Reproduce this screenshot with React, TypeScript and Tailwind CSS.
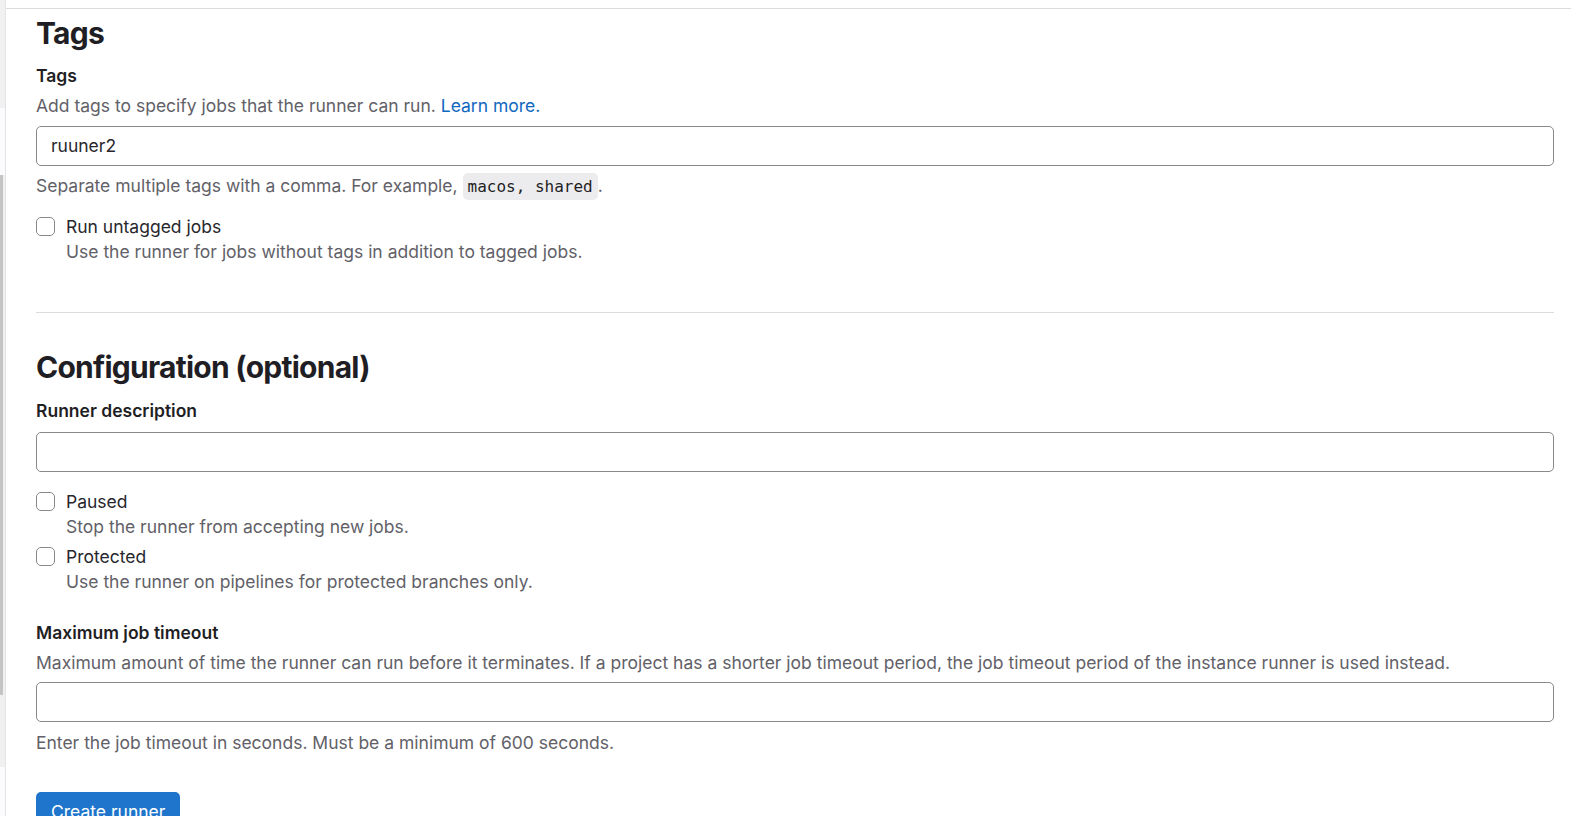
import React from "react";

const font = { fontFamily: "Inter, 'Noto Sans', sans-serif" };

// Checkbox row with label and helper text underneath
function CheckRow({ label, help, className = "" }: { label: string; help: string; className?: string }) {
  return (
    <div className={`flex gap-[11px] ${className}`}>
      <div className="mt-[3px] h-[19px] w-[19px] shrink-0 rounded-[5px] border border-[#89888d] bg-white" />
      <div>
        <div className="leading-[25px] text-[#28272d]">{label}</div>
        <div className="leading-[25px] text-[#626168]">{help}</div>
      </div>
    </div>
  );
}

function TextInput({ value = "" }: { value?: string }) {
  return (
    <div className="flex h-[40px] items-center rounded-[5px] border border-[#89888d] bg-white px-[14px] text-[#28272d]">
      {value}
    </div>
  );
}

export default function App() {
  return (
    <div className="flex h-[816px] w-full overflow-hidden bg-white text-[17.5px]" style={font}>
      {/* left sidebar sliver */}
      <div className="flex w-[6px] shrink-0 flex-col border-r border-[#e4e4e6]">
        <div className="h-[108px] bg-[#f1f1f2]" />
        <div className="h-[67px] bg-[#fbfafd]" />
        <div className="flex h-[520px] bg-[#f0f0f0]">
          <div className="w-[3px] bg-[#c4c4c4]" />
        </div>
        <div className="h-[72px] bg-[#f0f0f0]" />
        <div className="flex-1 bg-[#fbfafd]" />
      </div>

      <div className="flex-1">
        <div className="h-[8px]" />
        <div className="border-t border-[#dcdcde] pl-[30px] pr-[17px]">
          <h2 className="mt-[6px] text-[30px] font-bold leading-[36px] tracking-[-0.75px] text-[#1f1e24]">Tags</h2>
          <div className="mt-[12px] font-semibold leading-[25px] text-[#1f1e24]">Tags</div>
          <p className="mt-[5px] leading-[25px] text-[#626168]">
            Add tags to specify jobs that the runner can run.{" "}
            <span className="text-[#1068bf]">Learn more.</span>
          </p>
          <div className="mt-[8px]">
            <TextInput value="ruuner2" />
          </div>
          <p className="mt-[7px] leading-[25px] text-[#626168]">
            Separate multiple tags with a comma. For example,{" "}
            <code
              className="rounded-[5px] bg-[#ececef] px-[5px] py-[4px] text-[16px] text-[#1f1e24]"
              style={{ fontFamily: "'DejaVu Sans Mono', monospace" }}
            >
              macos, shared
            </code>
            .
          </p>
          <CheckRow
            className="mt-[15px]"
            label="Run untagged jobs"
            help="Use the runner for jobs without tags in addition to tagged jobs."
          />
          <div className="mt-[48px] border-t border-[#dcdcde]" />

          <h2 className="mt-[36px] text-[30px] font-bold leading-[36px] tracking-[-0.75px] text-[#1f1e24]">
            Configuration (optional)
          </h2>
          <div className="mt-[13px] font-semibold leading-[25px] text-[#1f1e24]">Runner description</div>
          <div className="mt-[9px]">
            <TextInput />
          </div>
          <CheckRow className="mt-[17px]" label="Paused" help="Stop the runner from accepting new jobs." />
          <CheckRow
            className="mt-[5px]"
            label="Protected"
            help="Use the runner on pipelines for protected branches only."
          />
          <div className="mt-[26px] font-semibold leading-[25px] text-[#1f1e24]">Maximum job timeout</div>
          <p className="mt-[5px] leading-[25px] text-[#626168]">
            Maximum amount of time the runner can run before it terminates. If a project has a shorter job timeout
            period, the job timeout period of the instance runner is used instead.
          </p>
          <div className="mt-[7px]">
            <TextInput />
          </div>
          <p className="mt-[8px] leading-[25px] text-[#626168]">
            Enter the job timeout in seconds. Must be a minimum of 600 seconds.
          </p>
          <button className="mt-[37px] h-[40px] rounded-[5px] bg-[#1f75cb] px-[15px] text-white">
            Create runner
          </button>
        </div>
      </div>
    </div>
  );
}
